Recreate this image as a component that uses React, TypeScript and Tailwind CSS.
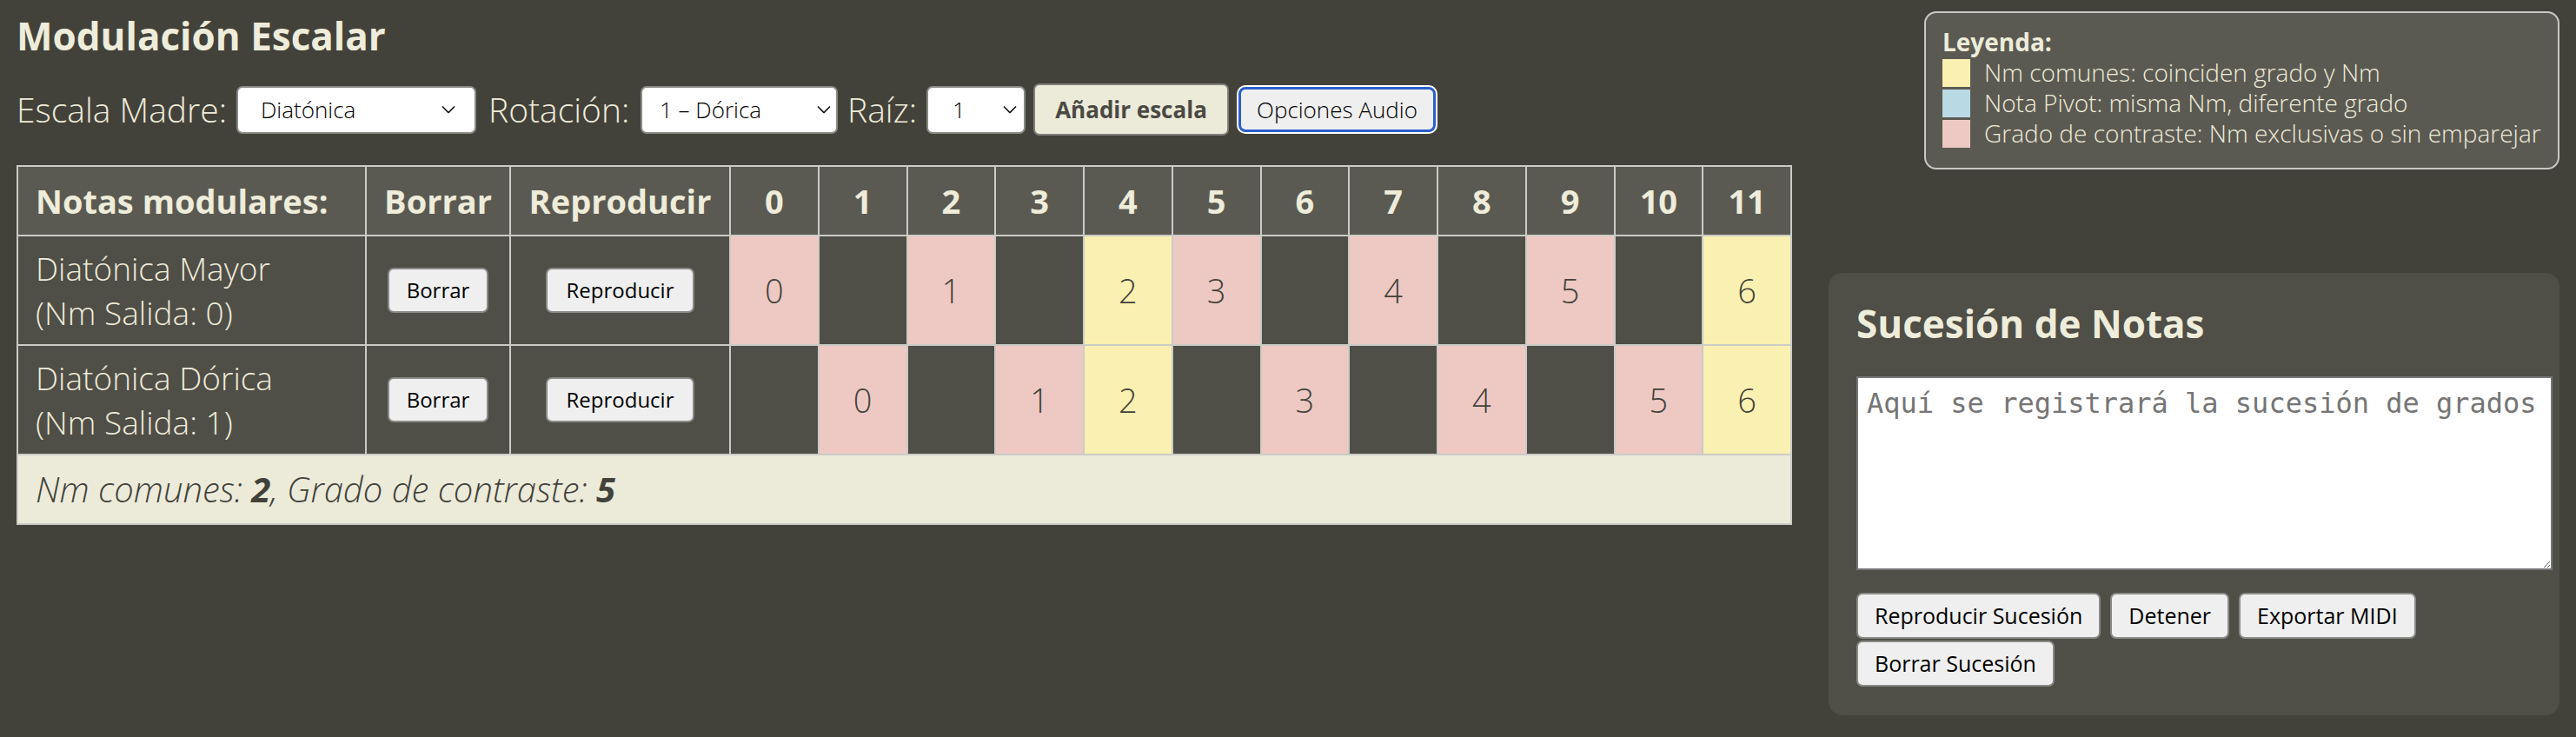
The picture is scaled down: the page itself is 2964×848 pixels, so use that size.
import { useState } from 'react'

// celdas: p = contraste (rosa), y = común (amarillo), . = vacía
const ESCALAS = [
  { nombre: 'Diatónica Mayor', salida: 0, tipos: 'p.p.yp.p.p.y', grados: ['0', '', '1', '', '2', '3', '', '4', '', '5', '', '6'] },
  { nombre: 'Diatónica Dórica', salida: 1, tipos: '.p.py.p.p.py', grados: ['', '0', '', '1', '2', '', '3', '', '4', '', '5', '6'] },
]

const CELDA: Record<string, string> = {
  p: 'bg-[#eec9c4]',
  y: 'bg-[#faf0b1]',
  '.': 'bg-[#4f4e47]',
}

const LEYENDA = [
  { color: 'bg-[#faf0b1]', texto: 'Nm comunes: coinciden grado y Nm' },
  { color: 'bg-[#b9d9e4]', texto: 'Nota Pivot: misma Nm, diferente grado' },
  { color: 'bg-[#eec9c4]', texto: 'Grado de contraste: Nm exclusivas o sin emparejar' },
]

const btn =
  'bg-[#efefef] text-black border-2 border-[#8a8a86] rounded-[7px] leading-none cursor-pointer'

function Chevron() {
  return (
    <svg width="16" height="9" viewBox="0 0 16 9" fill="none" stroke="#111" strokeWidth="1.6">
      <path d="M1 1l7 7 7-7" />
    </svg>
  )
}

function Select({ value, options, className, chevronRight }: { value: string; options: string[]; className: string; chevronRight: string }) {
  const [v, setV] = useState(value)
  return (
    <span className="relative inline-flex shrink-0">
      <select
        value={v}
        onChange={(e) => setV(e.target.value)}
        className={`appearance-none bg-white text-black border-2 border-[#8a8a86] rounded-[7px] h-[55px] text-[26px] ${className}`}
      >
        {options.map((o) => (
          <option key={o}>{o}</option>
        ))}
      </select>
      <span className={`absolute top-1/2 -translate-y-1/2 pointer-events-none flex ${chevronRight}`}>
        <Chevron />
      </span>
    </span>
  )
}

export default function App() {
  return (
    <div className="min-h-screen bg-[#43423a] text-[#eeecda] font-['Open_Sans',sans-serif] flex">
      <main className="flex-1 pl-[19px]">
        <h1 className="text-[44px] font-bold leading-none pt-[19px]">Modulación Escalar</h1>

        <div className="flex items-center mt-[33px] text-[39px] font-light whitespace-nowrap">
          <span className="w-[253px] shrink-0">Escala Madre:</span>
          <Select value="Diatónica" options={['Diatónica', 'Pentatónica', 'Armónica']} className="w-[276px] pl-[26px]" chevronRight="right-[24px]" />
          <span className="w-[189px] shrink-0 pl-[14px]">Rotación:</span>
          <Select value="1 – Dórica" options={['0 – Jónica', '1 – Dórica', '2 – Frigia']} className="w-[227px] pl-[20px]" chevronRight="right-[8px]" />
          <span className="w-[102px] shrink-0 pl-[11px]">Raíz:</span>
          <Select value="1" options={['0', '1', '2', '3']} className="w-[114px] pl-[28px]" chevronRight="right-[10px]" />
          <button className="ml-[9px] shrink-0 h-[60px] w-[225px] bg-[#ecebda] text-[#4a4943] font-bold text-[26px] border-2 border-[#7f7e79] rounded-[7px]">
            Añadir escala
          </button>
          <button className="ml-[11px] shrink-0 h-[52px] w-[227px] bg-[#efefef] text-black text-[26px] border-[3px] border-[#2b5fce] rounded-[8px] ring-2 ring-white">
            Opciones Audio
          </button>
        </div>

        <table className="mt-[34px] w-[2043px] table-fixed border-collapse border-2 border-[#cbcbc6]">
          <colgroup>
            <col className="w-[401px]" />
            <col className="w-[166px]" />
            <col className="w-[253px]" />
          </colgroup>
          <thead>
            <tr className="h-[80px] bg-[#5b5a52] text-[38px] font-bold">
              <th className="border-2 border-[#cbcbc6] text-left px-[20px] whitespace-nowrap">Notas modulares:</th>
              <th className="border-2 border-[#cbcbc6]">Borrar</th>
              <th className="border-2 border-[#cbcbc6]">Reproducir</th>
              {Array.from({ length: 12 }, (_, i) => (
                <th key={i} className="border-2 border-[#cbcbc6]">
                  {i}
                </th>
              ))}
            </tr>
          </thead>
          <tbody>
            {ESCALAS.map((e) => (
              <tr key={e.nombre} className="h-[126px] bg-[#4f4e47]">
                <td className="border-2 border-[#cbcbc6] px-[20px] text-[37px] font-light leading-[51px] whitespace-nowrap">
                  <div>{e.nombre}</div>
                  <div>(Nm Salida: {e.salida})</div>
                </td>
                <td className="border-2 border-[#cbcbc6] text-center">
                  <button className={`${btn} w-[116px] h-[52px] text-[24px]`}>Borrar</button>
                </td>
                <td className="border-2 border-[#cbcbc6] text-center">
                  <button className={`${btn} w-[171px] h-[52px] text-[24px]`}>Reproducir</button>
                </td>
                {e.grados.map((g, i) => (
                  <td
                    key={i}
                    className={`border-2 border-[#cbcbc6] text-center text-[38px] font-light text-[#43423a] ${CELDA[e.tipos[i]]}`}
                  >
                    {g}
                  </td>
                ))}
              </tr>
            ))}
            <tr className="h-[80px] bg-[#ecebda]">
              <td colSpan={15} className="border-2 border-[#cbcbc6] px-[20px] text-[40px] font-light italic text-[#43423a]">
                Nm comunes: <b className="font-bold">2</b>, Grado de contraste: <b className="font-bold">5</b>
              </td>
            </tr>
          </tbody>
        </table>
      </main>

      <aside className="w-[860px] pr-[19px] flex flex-col items-end">
        <div className="mt-[13px] w-[731px] h-[182px] border-2 border-[#c9c9c4] rounded-[14px] bg-[#5b5a52] px-[19px] pt-[16px] text-[28px] leading-[35px]">
          <div className="font-bold">Leyenda:</div>
          {LEYENDA.map((l) => (
            <div key={l.texto} className="flex items-center gap-[16px] font-light whitespace-nowrap">
              <span className={`w-[32px] h-[32px] shrink-0 ${l.color}`} />
              {l.texto}
            </div>
          ))}
        </div>

        <section className="mt-[119px] w-[841px] rounded-[16px] bg-[#4f4e47] px-[32px] pt-[32px] pb-[33px]">
          <h2 className="text-[44px] font-bold leading-[52px]">Sucesión de Notas</h2>
          <textarea
            placeholder="Aquí se registrará la sucesión de grados"
            className="block mt-[35px] w-[801px] h-[223px] bg-white border-2 border-[#767676] px-[10px] pt-[5px] pb-[8px] text-[32px] text-black placeholder:text-[#757575] font-['DejaVu_Sans_Mono',monospace]"
          />
          <div className="mt-[26px] flex flex-wrap gap-x-[11px] gap-y-[2px] text-[25px]">
            <button className={`${btn} h-[53px] px-[19px]`}>Reproducir Sucesión</button>
            <button className={`${btn} h-[53px] px-[19px]`}>Detener</button>
            <button className={`${btn} h-[53px] px-[19px]`}>Exportar MIDI</button>
            <button className={`${btn} h-[53px] px-[19px]`}>Borrar Sucesión</button>
          </div>
        </section>
      </aside>
    </div>
  )
}
